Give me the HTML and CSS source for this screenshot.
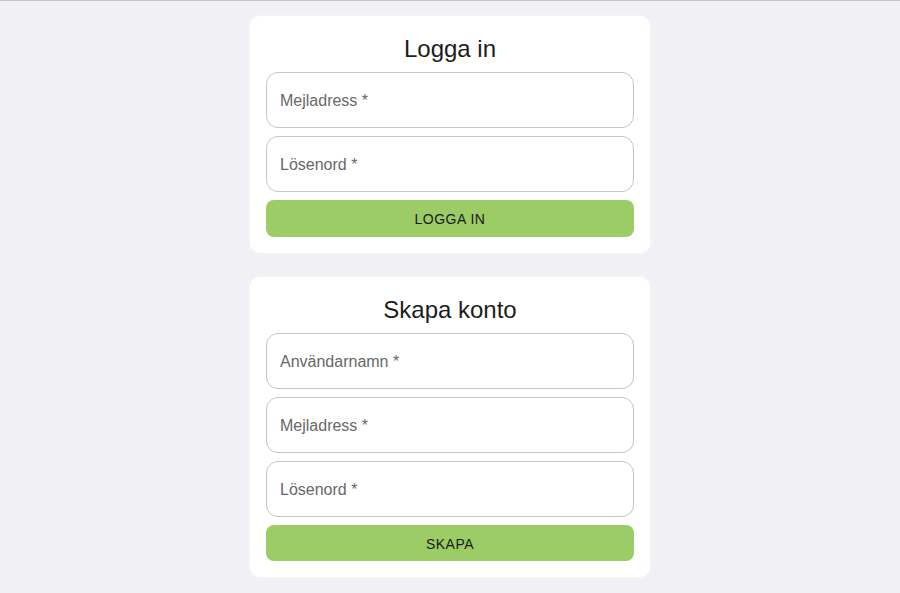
FILE: index.html
```html
<!DOCTYPE html>
<html lang="sv">
<head>
<meta charset="utf-8">
<link rel="stylesheet" href="styles.css">
</head>
<body>
<main class="page">
  <section class="card">
    <h1 class="title">Logga in</h1>
    <div class="field"><span class="label">Mejladress *</span></div>
    <div class="field"><span class="label">Lösenord *</span></div>
    <button class="btn">Logga in</button>
  </section>
  <section class="card">
    <h1 class="title">Skapa konto</h1>
    <div class="field"><span class="label">Användarnamn *</span></div>
    <div class="field"><span class="label">Mejladress *</span></div>
    <div class="field"><span class="label">Lösenord *</span></div>
    <button class="btn">Skapa</button>
  </section>
</main>
</body>
</html>
```
FILE: styles.css
```css
html, body {
  margin: 0;
  padding: 0;
  background: #f0f0f5;
  font-family: "Liberation Sans", Arial, sans-serif;
}
body {
  border-top: 1px solid #c6c6c9;
  height: 592px;
}
.page {
  display: flex;
  flex-direction: column;
  align-items: center;
  gap: 24px;
  padding-top: 15px;
}
.card {
  width: 400px;
  box-sizing: border-box;
  background: #fff;
  border-radius: 10px;
  padding: 16px;
  display: flex;
  flex-direction: column;
  gap: 8px;
  box-shadow: 0 0 6px rgba(255,255,255,0.6);
}
.title {
  margin: 0;
  height: 32px;
  line-height: 34px;
  font-size: 24px;
  font-weight: 400;
  text-align: center;
  color: #1c1c1c;
}
.field {
  height: 56px;
  box-sizing: border-box;
  border: 1px solid #c4c4c4;
  border-radius: 12px;
  padding: 2px 13px 0;
  display: flex;
  align-items: center;
}
.label {
  font-size: 16px;
  color: #686868;
}
.btn {
  height: 36.5px;
  border: none;
  border-radius: 8px;
  background: #9ccc65;
  color: #1a1a1a;
  font-family: inherit;
  font-size: 14px;
  font-weight: 400;
  letter-spacing: 0.5px;
  text-transform: uppercase;
  padding: 2px 0 0;
}
```
